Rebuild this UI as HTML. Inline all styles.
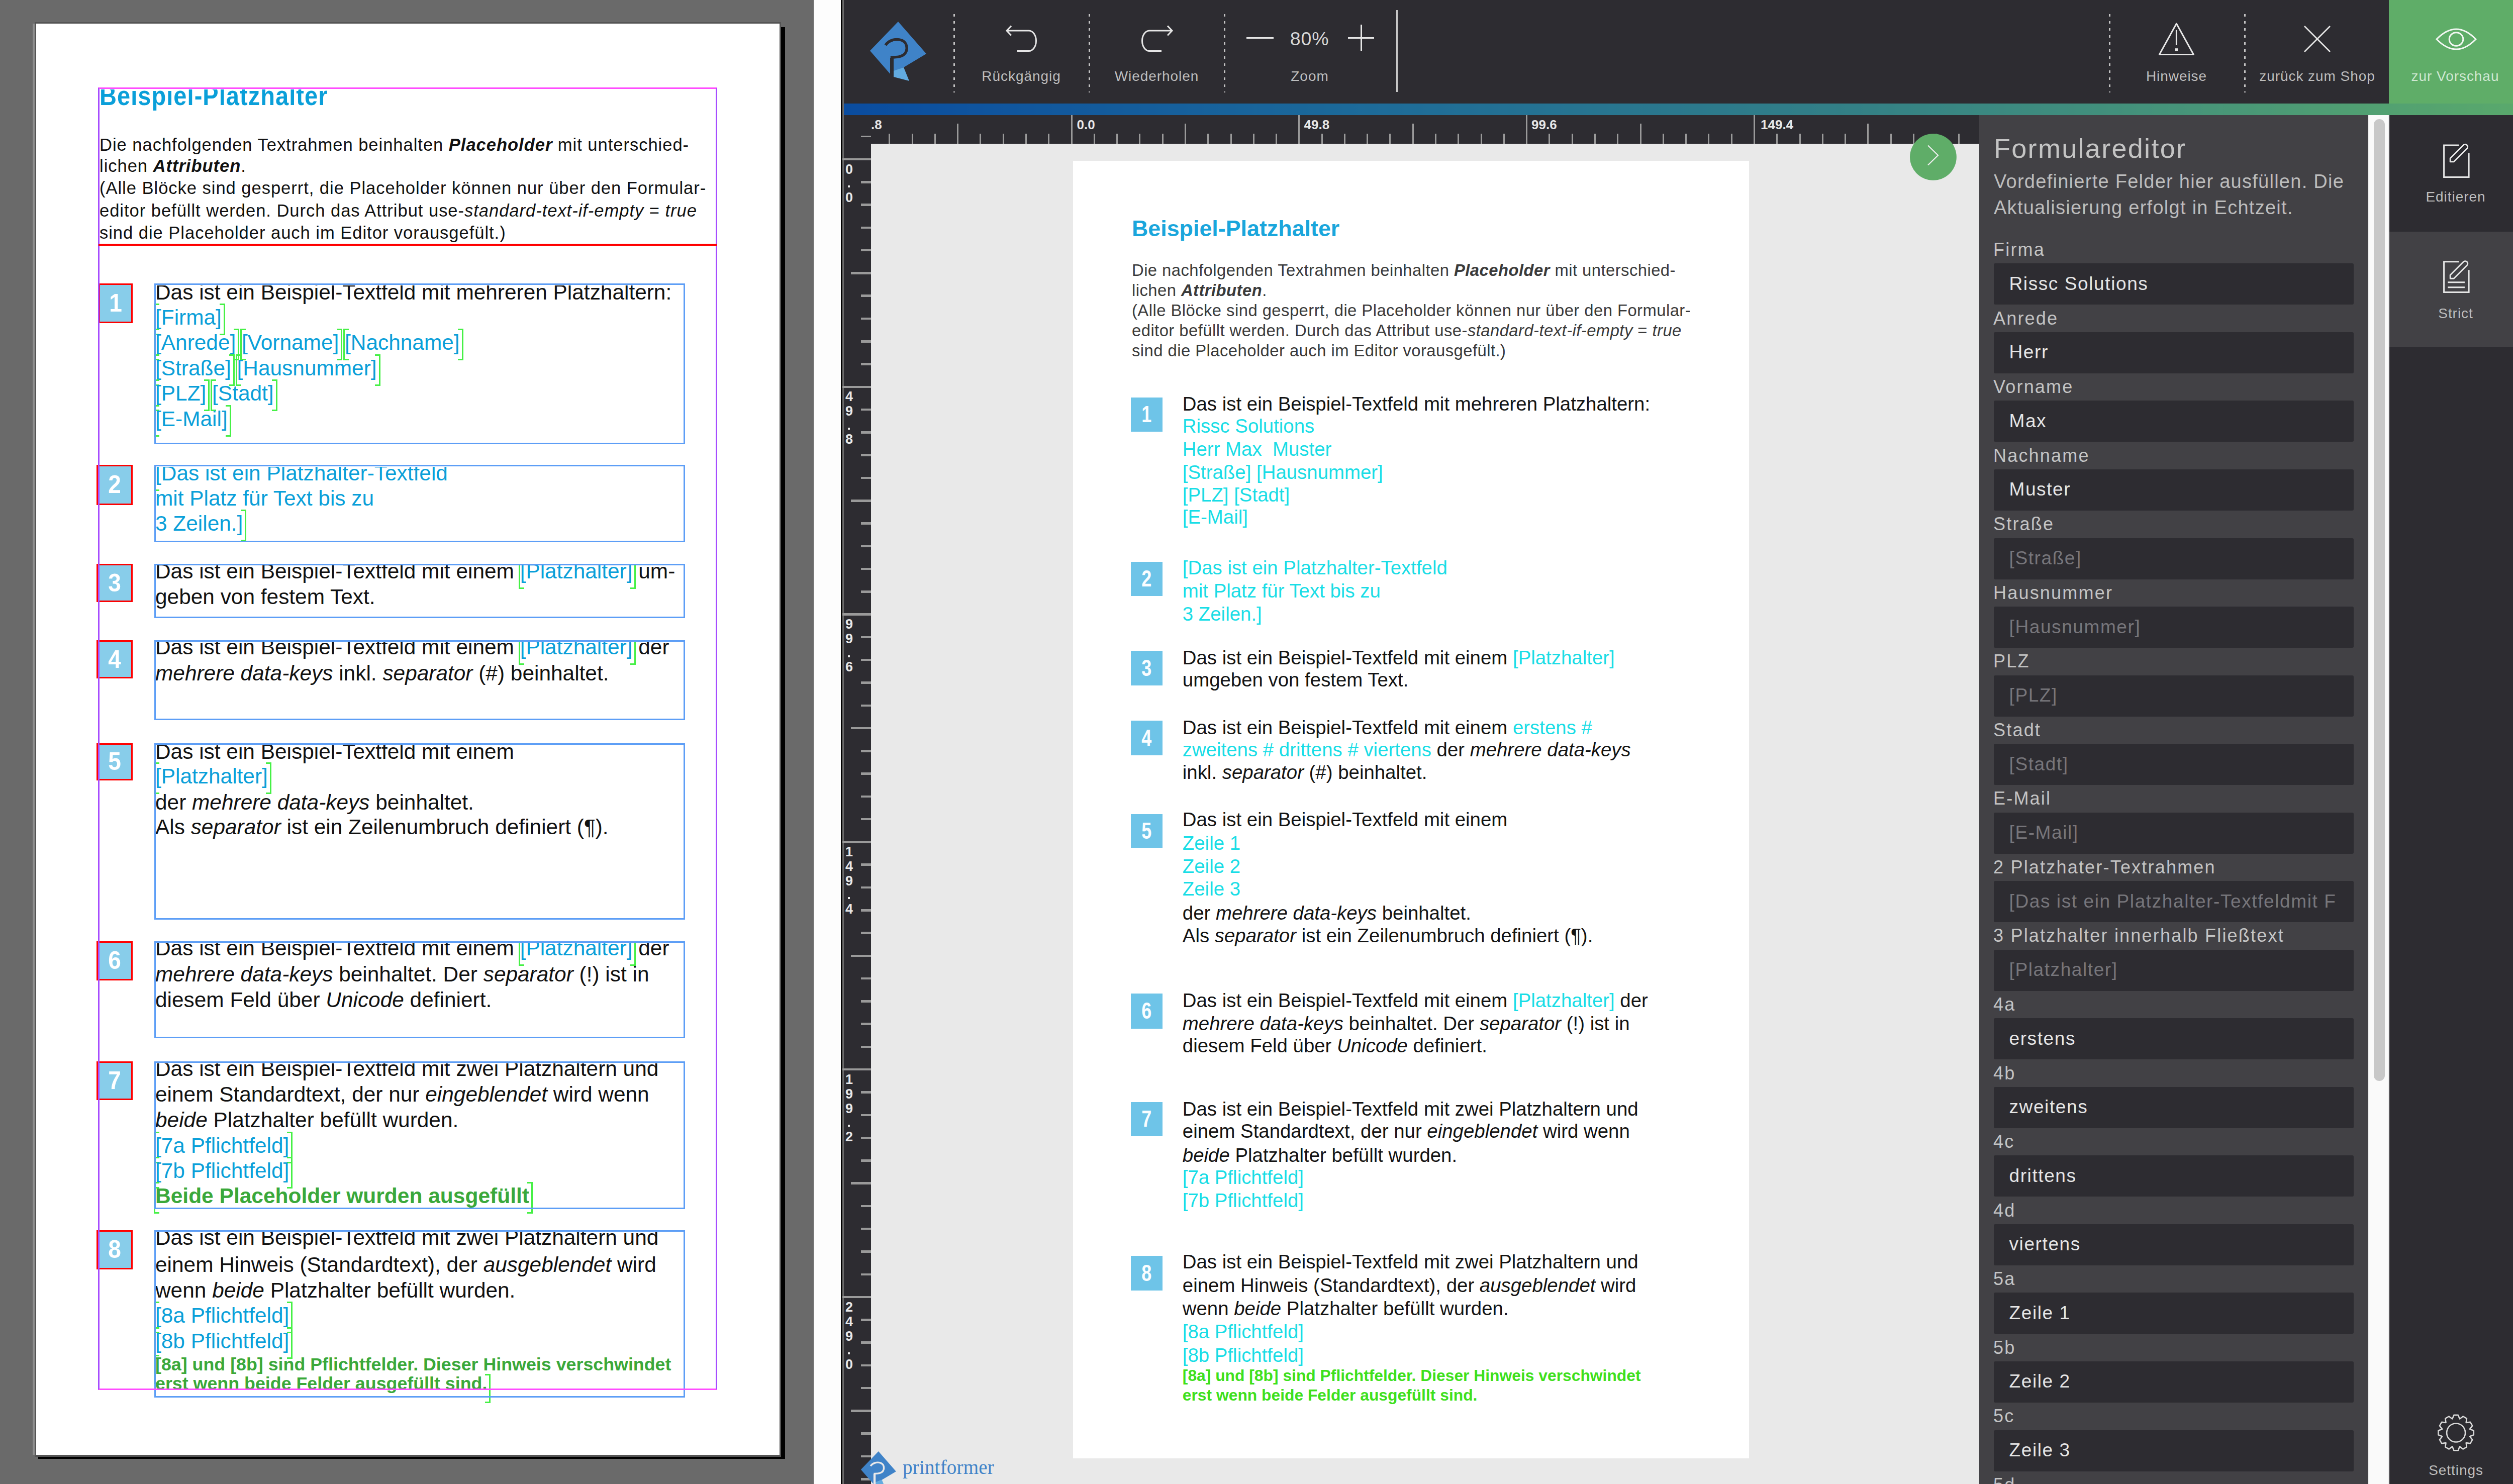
<!DOCTYPE html>
<html><head><meta charset="utf-8">
<style>
*{margin:0;padding:0;box-sizing:border-box}
html,body{width:5020px;height:2953px;overflow:hidden;background:#6a6a6a;font-family:"Liberation Sans",sans-serif}
.a{position:absolute}
.t{position:absolute;white-space:pre}
i{font-style:italic}
b{font-weight:bold}
svg{position:absolute;overflow:visible}
.mo,.mc{display:inline-block;position:relative;width:0;height:0}
.mo::before,.mc::before{content:"";position:absolute;top:-42px;width:8px;height:57px;border:3.5px solid #46f046}
.mo::before{left:-3px;border-right:none}
.mc::before{left:-4px;border-left:none}
.mo.s::before,.mc.s::before{top:-31px;height:52px}
</style></head><body>
<div class="a" style="left:0.0px;top:0.0px;width:1619.0px;height:2953.0px;background:#6a6a6a;"></div>
<div class="a" style="left:65.0px;top:47.0px;width:4.0px;height:2848.0px;background:#8f8f8f;"></div>
<div class="a" style="left:76.0px;top:2899.0px;width:1485.0px;height:3.5px;background:#000;"></div>
<div class="a" style="left:1554.0px;top:54.0px;width:7.5px;height:2848.5px;background:#000;"></div>
<div class="a" style="left:69.0px;top:43.5px;width:1485.0px;height:2855.5px;background:#555;"></div>
<div class="a" style="left:72.0px;top:47.0px;width:1479.0px;height:2848.0px;background:#fff;"></div>
<div class="a" style="left:0;top:177.5px;width:1600px;height:2900px;overflow:hidden"><div class="a" style="left:0;top:-177.5px;width:1600px;height:2953px">
<div class="t" style="left:198.0px;top:165.1px;font-size:47px;line-height:56px;color:#0a9fd9;font-weight:bold;letter-spacing:1.05px;transform:scaleY(1.15);transform-origin:0 44.29px">Beispiel-Platzhalter</div>
</div></div>
<div class="t" style="left:198.0px;top:266.6px;font-size:34.6px;line-height:42px;color:#111;letter-spacing:0.95px">Die nachfolgenden Textrahmen beinhalten <b><i>Placeholder</i></b> mit unterschied-</div>
<div class="t" style="left:198.0px;top:309.0px;font-size:34.6px;line-height:42px;color:#111;letter-spacing:0.95px">lichen <b><i>Attributen</i></b>.</div>
<div class="t" style="left:198.0px;top:353.3px;font-size:34.6px;line-height:42px;color:#111;letter-spacing:0.95px">(Alle Blöcke sind gesperrt, die Placeholder können nur über den Formular-</div>
<div class="t" style="left:198.0px;top:398.2px;font-size:34.6px;line-height:42px;color:#111;letter-spacing:0.95px">editor befüllt werden. Durch das Attribut use-<i>standard-text-if-empty</i> = <i>true</i></div>
<div class="t" style="left:198.0px;top:442.0px;font-size:34.6px;line-height:42px;color:#111;letter-spacing:0.95px">sind die Placeholder auch im Editor vorausgefült.)</div>
<div class="a" style="left:0;top:567.7px;width:1600px;height:2900px;overflow:hidden"><div class="a" style="left:0;top:-567.7px;width:1600px;height:2953px">
<div class="t" style="left:309.0px;top:556.2px;font-size:42.4px;line-height:51px;color:#111;">Das ist ein Beispiel-Textfeld mit mehreren Platzhaltern:</div>
<div class="t" style="left:309.0px;top:606.2px;font-size:42.4px;line-height:51px;color:#111;"><span class="mo"></span><span style="color:#0a9fd9">[Firma]</span><span class="mc"></span></div>
<div class="t" style="left:309.0px;top:656.3px;font-size:42.4px;line-height:51px;color:#111;"><span class="mo"></span><span style="color:#0a9fd9">[Anrede]</span><span class="mc"></span> <span class="mo"></span><span style="color:#0a9fd9">[Vorname]</span><span class="mc"></span> <span class="mo"></span><span style="color:#0a9fd9">[Nachname]</span><span class="mc"></span></div>
<div class="t" style="left:309.0px;top:706.8px;font-size:42.4px;line-height:51px;color:#111;"><span class="mo"></span><span style="color:#0a9fd9">[Straße]</span><span class="mc"></span> <span class="mo"></span><span style="color:#0a9fd9">[Hausnummer]</span><span class="mc"></span></div>
<div class="t" style="left:309.0px;top:757.4px;font-size:42.4px;line-height:51px;color:#111;"><span class="mo"></span><span style="color:#0a9fd9">[PLZ]</span><span class="mc"></span> <span class="mo"></span><span style="color:#0a9fd9">[Stadt]</span><span class="mc"></span></div>
<div class="t" style="left:309.0px;top:807.5px;font-size:42.4px;line-height:51px;color:#111;"><span class="mo"></span><span style="color:#0a9fd9">[E-Mail]</span><span class="mc"></span></div>
</div></div>
<div class="a" style="left:0;top:928.7px;width:1600px;height:2900px;overflow:hidden"><div class="a" style="left:0;top:-928.7px;width:1600px;height:2953px">
<div class="t" style="left:309.0px;top:915.8px;font-size:42.4px;line-height:51px;color:#111;"><span class="mo"></span><span style="color:#0a9fd9">[Das ist ein Platzhalter-Textfeld</span></div>
<div class="t" style="left:309.0px;top:966.4px;font-size:42.4px;line-height:51px;color:#111;"><span style="color:#0a9fd9">mit Platz für Text bis zu</span></div>
<div class="t" style="left:309.0px;top:1016.4px;font-size:42.4px;line-height:51px;color:#111;"><span style="color:#0a9fd9">3 Zeilen.]</span><span class="mc"></span></div>
</div></div>
<div class="a" style="left:0;top:1125.2px;width:1600px;height:2900px;overflow:hidden"><div class="a" style="left:0;top:-1125.2px;width:1600px;height:2953px">
<div class="t" style="left:309.0px;top:1111.4px;font-size:42.4px;line-height:51px;color:#111;">Das ist ein Beispiel-Textfeld mit einem <span class="mo"></span><span style="color:#0a9fd9">[Platzhalter]</span><span class="mc"></span> um-</div>
<div class="t" style="left:309.0px;top:1162.0px;font-size:42.4px;line-height:51px;color:#111;">geben von festem Text.</div>
</div></div>
<div class="a" style="left:0;top:1277.5px;width:1600px;height:2900px;overflow:hidden"><div class="a" style="left:0;top:-1277.5px;width:1600px;height:2953px">
<div class="t" style="left:309.0px;top:1261.8px;font-size:42.4px;line-height:51px;color:#111;">Das ist ein Beispiel-Textfeld mit einem <span class="mo"></span><span style="color:#0a9fd9">[Platzhalter]</span><span class="mc"></span> der</div>
<div class="t" style="left:309.0px;top:1313.7px;font-size:42.4px;line-height:51px;color:#111;"><i>mehrere data-keys</i> inkl. <i>separator</i> (#) beinhaltet.</div>
</div></div>
<div class="a" style="left:0;top:1482.8px;width:1600px;height:2900px;overflow:hidden"><div class="a" style="left:0;top:-1482.8px;width:1600px;height:2953px">
<div class="t" style="left:309.0px;top:1469.8px;font-size:42.4px;line-height:51px;color:#111;">Das ist ein Beispiel-Textfeld mit einem</div>
<div class="t" style="left:309.0px;top:1518.8px;font-size:42.4px;line-height:51px;color:#111;"><span class="mo"></span><span style="color:#0a9fd9">[Platzhalter]</span><span class="mc"></span></div>
<div class="t" style="left:309.0px;top:1570.6px;font-size:42.4px;line-height:51px;color:#111;">der <i>mehrere data-keys</i> beinhaltet.</div>
<div class="t" style="left:309.0px;top:1619.8px;font-size:42.4px;line-height:51px;color:#111;">Als <i>separator</i> ist ein Zeilenumbruch definiert (¶).</div>
</div></div>
<div class="a" style="left:0;top:1876.5px;width:1600px;height:2900px;overflow:hidden"><div class="a" style="left:0;top:-1876.5px;width:1600px;height:2953px">
<div class="t" style="left:309.0px;top:1861.4px;font-size:42.4px;line-height:51px;color:#111;">Das ist ein Beispiel-Textfeld mit einem <span class="mo"></span><span style="color:#0a9fd9">[Platzhalter]</span><span class="mc"></span> der</div>
<div class="t" style="left:309.0px;top:1913.0px;font-size:42.4px;line-height:51px;color:#111;"><i>mehrere data-keys</i> beinhaltet. Der <i>separator</i> (!) ist in</div>
<div class="t" style="left:309.0px;top:1963.6px;font-size:42.4px;line-height:51px;color:#111;">diesem Feld über <i>Unicode</i> definiert.</div>
</div></div>
<div class="a" style="left:0;top:2115.5px;width:1600px;height:2900px;overflow:hidden"><div class="a" style="left:0;top:-2115.5px;width:1600px;height:2953px">
<div class="t" style="left:309.0px;top:2101.3px;font-size:42.4px;line-height:51px;color:#111;">Das ist ein Beispiel-Textfeld mit zwei Platzhaltern und</div>
<div class="t" style="left:309.0px;top:2151.8px;font-size:42.4px;line-height:51px;color:#111;">einem Standardtext, der nur <i>eingeblendet</i> wird wenn</div>
<div class="t" style="left:309.0px;top:2203.0px;font-size:42.4px;line-height:51px;color:#111;"><i>beide</i> Platzhalter befüllt wurden.</div>
<div class="t" style="left:309.0px;top:2253.6px;font-size:42.4px;line-height:51px;color:#111;"><span class="mo"></span><span style="color:#0a9fd9">[7a Pflichtfeld]</span><span class="mc"></span></div>
<div class="t" style="left:309.0px;top:2303.6px;font-size:42.4px;line-height:51px;color:#111;"><span class="mo"></span><span style="color:#0a9fd9">[7b Pflichtfeld]</span><span class="mc"></span></div>
<div class="t" style="left:309.0px;top:2354.2px;font-size:42.5px;line-height:51px;color:#3aa83a;font-weight:bold"><span class="mo"></span>Beide Placeholder wurden ausgefüllt<span class="mc"></span></div>
</div></div>
<div class="a" style="left:0;top:2451.9px;width:1600px;height:2900px;overflow:hidden"><div class="a" style="left:0;top:-2451.9px;width:1600px;height:2953px">
<div class="t" style="left:309.0px;top:2436.6px;font-size:42.4px;line-height:51px;color:#111;">Das ist ein Beispiel-Textfeld mit zwei Platzhaltern und</div>
<div class="t" style="left:309.0px;top:2490.8px;font-size:42.4px;line-height:51px;color:#111;">einem Hinweis (Standardtext), der <i>ausgeblendet</i> wird</div>
<div class="t" style="left:309.0px;top:2542.3px;font-size:42.4px;line-height:51px;color:#111;">wenn <i>beide</i> Platzhalter befüllt wurden.</div>
<div class="t" style="left:309.0px;top:2592.4px;font-size:42.4px;line-height:51px;color:#111;"><span class="mo"></span><span style="color:#0a9fd9">[8a Pflichtfeld]</span><span class="mc"></span></div>
<div class="t" style="left:309.0px;top:2642.8px;font-size:42.4px;line-height:51px;color:#111;"><span class="mo"></span><span style="color:#0a9fd9">[8b Pflichtfeld]</span><span class="mc"></span></div>
<div class="t" style="left:309.0px;top:2694.1px;font-size:35.8px;line-height:43px;color:#3aa83a;font-weight:bold"><span class="mo s"></span>[8a] und [8b] sind Pflichtfelder. Dieser Hinweis verschwindet</div>
<div class="t" style="left:309.0px;top:2732.1px;font-size:35.8px;line-height:43px;color:#3aa83a;font-weight:bold">erst wenn beide Felder ausgefüllt sind.<span class="mc s"></span></div>
</div></div>
<div class="a" style="left:307px;top:564.2px;width:1056px;height:319.8px;border:3.5px solid #5d9ef6"></div>
<div class="a" style="left:196px;top:564.2px;width:68px;height:78.8px;background:#88cdea;border:3.5px solid #ff0000"></div>
<div class="t" style="left:199.5px;top:564.2px;width:61px;height:78.8px;line-height:78.8px;text-align:center;font-size:46px;font-weight:bold;color:#fff;transform:scaleY(1.09)">1</div>
<div class="a" style="left:307px;top:925.2px;width:1056px;height:153.8px;border:3.5px solid #5d9ef6"></div>
<div class="a" style="left:192px;top:925.2px;width:72px;height:79.4px;background:#88cdea;border:3.5px solid #ff0000"></div>
<div class="t" style="left:195.5px;top:925.2px;width:65px;height:79.4px;line-height:79.4px;text-align:center;font-size:46px;font-weight:bold;color:#fff;transform:scaleY(1.09)">2</div>
<div class="a" style="left:307px;top:1121.7px;width:1056px;height:108.8px;border:3.5px solid #5d9ef6"></div>
<div class="a" style="left:192px;top:1121.7px;width:72px;height:76.3px;background:#88cdea;border:3.5px solid #ff0000"></div>
<div class="t" style="left:195.5px;top:1121.7px;width:65px;height:76.3px;line-height:76.3px;text-align:center;font-size:46px;font-weight:bold;color:#fff;transform:scaleY(1.09)">3</div>
<div class="a" style="left:307px;top:1274.0px;width:1056px;height:158.8px;border:3.5px solid #5d9ef6"></div>
<div class="a" style="left:192px;top:1274.0px;width:72px;height:76.3px;background:#88cdea;border:3.5px solid #ff0000"></div>
<div class="t" style="left:195.5px;top:1274.0px;width:65px;height:76.3px;line-height:76.3px;text-align:center;font-size:46px;font-weight:bold;color:#fff;transform:scaleY(1.09)">4</div>
<div class="a" style="left:307px;top:1479.3px;width:1056px;height:350.7px;border:3.5px solid #5d9ef6"></div>
<div class="a" style="left:192px;top:1479.3px;width:72px;height:73.7px;background:#88cdea;border:3.5px solid #ff0000"></div>
<div class="t" style="left:195.5px;top:1479.3px;width:65px;height:73.7px;line-height:73.7px;text-align:center;font-size:46px;font-weight:bold;color:#fff;transform:scaleY(1.09)">5</div>
<div class="a" style="left:307px;top:1873.0px;width:1056px;height:192.7px;border:3.5px solid #5d9ef6"></div>
<div class="a" style="left:192px;top:1873.0px;width:72px;height:77.6px;background:#88cdea;border:3.5px solid #ff0000"></div>
<div class="t" style="left:195.5px;top:1873.0px;width:65px;height:77.6px;line-height:77.6px;text-align:center;font-size:46px;font-weight:bold;color:#fff;transform:scaleY(1.09)">6</div>
<div class="a" style="left:307px;top:2112.0px;width:1056px;height:293.7px;border:3.5px solid #5d9ef6"></div>
<div class="a" style="left:192px;top:2112.0px;width:72px;height:77.0px;background:#88cdea;border:3.5px solid #ff0000"></div>
<div class="t" style="left:195.5px;top:2112.0px;width:65px;height:77.0px;line-height:77.0px;text-align:center;font-size:46px;font-weight:bold;color:#fff;transform:scaleY(1.09)">7</div>
<div class="a" style="left:307px;top:2448.4px;width:1056px;height:332.8px;border:3.5px solid #5d9ef6"></div>
<div class="a" style="left:192px;top:2448.4px;width:72px;height:77.4px;background:#88cdea;border:3.5px solid #ff0000"></div>
<div class="t" style="left:195.5px;top:2448.4px;width:65px;height:77.4px;line-height:77.4px;text-align:center;font-size:46px;font-weight:bold;color:#fff;transform:scaleY(1.09)">8</div>
<div class="a" style="left:195px;top:174px;width:1232px;height:2592px;border:3.5px solid #a64cff;border-top-color:#ff4cff;border-bottom-color:#ff4cff"></div>
<div class="a" style="left:196.0px;top:485.0px;width:1230.0px;height:3.5px;background:#ff0000;"></div>
<div class="a" style="left:1619.0px;top:0.0px;width:54.0px;height:2953.0px;background:#fdfdfd;"></div>
<div class="a" style="left:1673.0px;top:0.0px;width:3.0px;height:2953.0px;background:#000;"></div>
<div class="a" style="left:1676.0px;top:0.0px;width:3.0px;height:2953.0px;background:#6b6b6b;"></div>
<div class="a" style="left:1679.0px;top:0.0px;width:3341.0px;height:2953.0px;background:#2d2c31;"></div>
<div class="a" style="left:4753.0px;top:0.0px;width:267.0px;height:207.0px;background:#5fad68;"></div>
<div class="a" style="left:1679.0px;top:206.0px;width:3341.0px;height:23.0px;background:linear-gradient(90deg,#0a4c9f 0%,#1c6a9a 30%,#338086 60%,#5aa96c 100%);"></div>
<svg style="left:1720px;top:35px" width="130.0" height="135.0" viewBox="0 0 130 135"><path d="M67,8 L123,72 L78,99 L58,107 L58,80 L51,80 L51,112 L11,66 Z" fill="#3f83c8"/><path d="M58,106 L78,99 L89,126 L58,118 Z" fill="#62abe0"/><path d="M42,55 C48,45 62,41 74,45 C88,51 88,72 72,77 C66,79 60,79 54.5,79 L54.5,112" fill="none" stroke="#2d2c31" stroke-width="5.5"/></svg>
<div class="a" style="left:1897.1px;top:28px;width:3px;height:156px;background:repeating-linear-gradient(180deg,#c4c4c4 0 5.5px,transparent 5.5px 14px)"></div>
<div class="a" style="left:2166.1px;top:28px;width:3px;height:156px;background:repeating-linear-gradient(180deg,#c4c4c4 0 5.5px,transparent 5.5px 14px)"></div>
<div class="a" style="left:2435.2px;top:28px;width:3px;height:156px;background:repeating-linear-gradient(180deg,#c4c4c4 0 5.5px,transparent 5.5px 14px)"></div>
<div class="a" style="left:4195.5px;top:28px;width:3px;height:156px;background:repeating-linear-gradient(180deg,#c4c4c4 0 5.5px,transparent 5.5px 14px)"></div>
<div class="a" style="left:4464.5px;top:28px;width:3px;height:156px;background:repeating-linear-gradient(180deg,#c4c4c4 0 5.5px,transparent 5.5px 14px)"></div>
<div class="a" style="left:2778.0px;top:20.0px;width:3.0px;height:163.0px;background:#c8c8c8;"></div>
<svg style="left:0;top:0" width="1" height="1"><path d="M2003,61 H2047 A14.5,20.3 0 0 1 2047,101.6 H2024 M2012,51.5 L2003,61 L2012,70.5" fill="none" stroke="#e6e6e6" stroke-width="3"/></svg>
<svg style="left:0;top:0" width="1" height="1"><path d="M2332,61 H2287 A14.5,20.3 0 0 0 2287,101.6 H2311 M2323,51.5 L2332,61 L2323,70.5" fill="none" stroke="#e6e6e6" stroke-width="3"/></svg>
<div class="a" style="left:2479.5px;top:73.5px;width:54.5px;height:3.0px;background:#e6e6e6;"></div>
<div class="a" style="left:2682.0px;top:73.5px;width:52.0px;height:3.0px;background:#e6e6e6;"></div>
<div class="a" style="left:2706.5px;top:49.0px;width:3.0px;height:52.0px;background:#e6e6e6;"></div>
<div class="t" style="left:1605.7px;width:2000px;text-align:center;top:55.0px;font-size:37.5px;line-height:45px;color:#d6d6d6;letter-spacing:1px">80%</div>
<div class="t" style="left:1032.0px;width:2000px;text-align:center;top:135.3px;font-size:28px;line-height:34px;color:#bdbdbd;letter-spacing:0.95px">Rückgängig</div>
<div class="t" style="left:1301.5px;width:2000px;text-align:center;top:135.3px;font-size:28px;line-height:34px;color:#bdbdbd;letter-spacing:0.95px">Wiederholen</div>
<div class="t" style="left:1606.0px;width:2000px;text-align:center;top:135.3px;font-size:28px;line-height:34px;color:#bdbdbd;letter-spacing:0.95px">Zoom</div>
<div class="t" style="left:3330.5px;width:2000px;text-align:center;top:134.6px;font-size:28px;line-height:34px;color:#bdbdbd;letter-spacing:0.95px">Hinweise</div>
<div class="t" style="left:3610.5px;width:2000px;text-align:center;top:134.6px;font-size:28px;line-height:34px;color:#bdbdbd;letter-spacing:0.95px">zurück zum Shop</div>
<div class="t" style="left:3885.0px;width:2000px;text-align:center;top:134.6px;font-size:28px;line-height:34px;color:#cfe8d2;letter-spacing:0.95px">zur Vorschau</div>
<svg style="left:0;top:0" width="1" height="1"><path d="M4330.4,47 L4364.4,108.5 L4296.4,108.5 Z" fill="none" stroke="#e6e6e6" stroke-width="3" stroke-linejoin="round"/><path d="M4330.4,59.8 V90" stroke="#e6e6e6" stroke-width="3"/><rect x="4327.8" y="96.2" width="5.2" height="5.2" fill="#e6e6e6"/></svg>
<svg style="left:0;top:0" width="1" height="1"><path d="M4585,52 L4636,103 M4636,52 L4585,103" stroke="#e6e6e6" stroke-width="2.8"/></svg>
<svg style="left:0;top:0" width="1" height="1"><path d="M4848,78 Q4887,38 4926,78 Q4887,118 4848,78 Z" fill="none" stroke="#f2f7f2" stroke-width="3"/><ellipse cx="4887" cy="78" rx="13.8" ry="13.3" fill="none" stroke="#f2f7f2" stroke-width="3"/></svg>
<div class="a" style="left:1768.3px;top:266.0px;width:3.0px;height:20.0px;background:#9a9a9a;"></div>
<div class="a" style="left:1813.5px;top:266.0px;width:3.0px;height:20.0px;background:#9a9a9a;"></div>
<div class="a" style="left:1858.8px;top:266.0px;width:3.0px;height:20.0px;background:#9a9a9a;"></div>
<div class="a" style="left:1904.1px;top:246.0px;width:3.0px;height:40.0px;background:#9a9a9a;"></div>
<div class="a" style="left:1949.4px;top:266.0px;width:3.0px;height:20.0px;background:#9a9a9a;"></div>
<div class="a" style="left:1994.7px;top:266.0px;width:3.0px;height:20.0px;background:#9a9a9a;"></div>
<div class="a" style="left:2039.9px;top:266.0px;width:3.0px;height:20.0px;background:#9a9a9a;"></div>
<div class="a" style="left:2085.2px;top:266.0px;width:3.0px;height:20.0px;background:#9a9a9a;"></div>
<div class="a" style="left:2130.5px;top:229.0px;width:3.0px;height:57.0px;background:#9a9a9a;"></div>
<div class="a" style="left:2175.8px;top:266.0px;width:3.0px;height:20.0px;background:#9a9a9a;"></div>
<div class="a" style="left:2221.1px;top:266.0px;width:3.0px;height:20.0px;background:#9a9a9a;"></div>
<div class="a" style="left:2266.3px;top:266.0px;width:3.0px;height:20.0px;background:#9a9a9a;"></div>
<div class="a" style="left:2311.6px;top:266.0px;width:3.0px;height:20.0px;background:#9a9a9a;"></div>
<div class="a" style="left:2356.9px;top:246.0px;width:3.0px;height:40.0px;background:#9a9a9a;"></div>
<div class="a" style="left:2402.2px;top:266.0px;width:3.0px;height:20.0px;background:#9a9a9a;"></div>
<div class="a" style="left:2447.5px;top:266.0px;width:3.0px;height:20.0px;background:#9a9a9a;"></div>
<div class="a" style="left:2492.7px;top:266.0px;width:3.0px;height:20.0px;background:#9a9a9a;"></div>
<div class="a" style="left:2538.0px;top:266.0px;width:3.0px;height:20.0px;background:#9a9a9a;"></div>
<div class="a" style="left:2583.3px;top:229.0px;width:3.0px;height:57.0px;background:#9a9a9a;"></div>
<div class="a" style="left:2628.6px;top:266.0px;width:3.0px;height:20.0px;background:#9a9a9a;"></div>
<div class="a" style="left:2673.9px;top:266.0px;width:3.0px;height:20.0px;background:#9a9a9a;"></div>
<div class="a" style="left:2719.1px;top:266.0px;width:3.0px;height:20.0px;background:#9a9a9a;"></div>
<div class="a" style="left:2764.4px;top:266.0px;width:3.0px;height:20.0px;background:#9a9a9a;"></div>
<div class="a" style="left:2809.7px;top:246.0px;width:3.0px;height:40.0px;background:#9a9a9a;"></div>
<div class="a" style="left:2855.0px;top:266.0px;width:3.0px;height:20.0px;background:#9a9a9a;"></div>
<div class="a" style="left:2900.3px;top:266.0px;width:3.0px;height:20.0px;background:#9a9a9a;"></div>
<div class="a" style="left:2945.5px;top:266.0px;width:3.0px;height:20.0px;background:#9a9a9a;"></div>
<div class="a" style="left:2990.8px;top:266.0px;width:3.0px;height:20.0px;background:#9a9a9a;"></div>
<div class="a" style="left:3036.1px;top:229.0px;width:3.0px;height:57.0px;background:#9a9a9a;"></div>
<div class="a" style="left:3081.4px;top:266.0px;width:3.0px;height:20.0px;background:#9a9a9a;"></div>
<div class="a" style="left:3126.7px;top:266.0px;width:3.0px;height:20.0px;background:#9a9a9a;"></div>
<div class="a" style="left:3171.9px;top:266.0px;width:3.0px;height:20.0px;background:#9a9a9a;"></div>
<div class="a" style="left:3217.2px;top:266.0px;width:3.0px;height:20.0px;background:#9a9a9a;"></div>
<div class="a" style="left:3262.5px;top:246.0px;width:3.0px;height:40.0px;background:#9a9a9a;"></div>
<div class="a" style="left:3307.8px;top:266.0px;width:3.0px;height:20.0px;background:#9a9a9a;"></div>
<div class="a" style="left:3353.1px;top:266.0px;width:3.0px;height:20.0px;background:#9a9a9a;"></div>
<div class="a" style="left:3398.3px;top:266.0px;width:3.0px;height:20.0px;background:#9a9a9a;"></div>
<div class="a" style="left:3443.6px;top:266.0px;width:3.0px;height:20.0px;background:#9a9a9a;"></div>
<div class="a" style="left:3488.9px;top:229.0px;width:3.0px;height:57.0px;background:#9a9a9a;"></div>
<div class="a" style="left:3534.2px;top:266.0px;width:3.0px;height:20.0px;background:#9a9a9a;"></div>
<div class="a" style="left:3579.5px;top:266.0px;width:3.0px;height:20.0px;background:#9a9a9a;"></div>
<div class="a" style="left:3624.7px;top:266.0px;width:3.0px;height:20.0px;background:#9a9a9a;"></div>
<div class="a" style="left:3670.0px;top:266.0px;width:3.0px;height:20.0px;background:#9a9a9a;"></div>
<div class="a" style="left:3715.3px;top:246.0px;width:3.0px;height:40.0px;background:#9a9a9a;"></div>
<div class="a" style="left:3760.6px;top:266.0px;width:3.0px;height:20.0px;background:#9a9a9a;"></div>
<div class="a" style="left:3805.9px;top:266.0px;width:3.0px;height:20.0px;background:#9a9a9a;"></div>
<div class="a" style="left:3851.1px;top:266.0px;width:3.0px;height:20.0px;background:#9a9a9a;"></div>
<div class="a" style="left:3896.4px;top:266.0px;width:3.0px;height:20.0px;background:#9a9a9a;"></div>
<div class="t" style="left:1733.0px;top:232.5px;font-size:26px;line-height:31px;color:#e8e8e8;font-weight:bold">.8</div>
<div class="t" style="left:2142.6px;top:232.5px;font-size:26px;line-height:31px;color:#e8e8e8;font-weight:bold">0.0</div>
<div class="t" style="left:2594.6px;top:232.5px;font-size:26px;line-height:31px;color:#e8e8e8;font-weight:bold">49.8</div>
<div class="t" style="left:3047.0px;top:232.5px;font-size:26px;line-height:31px;color:#e8e8e8;font-weight:bold">99.6</div>
<div class="t" style="left:3503.0px;top:232.5px;font-size:26px;line-height:31px;color:#e8e8e8;font-weight:bold">149.4</div>
<div class="a" style="left:1713.0px;top:270.0px;width:20.0px;height:3.0px;background:#9a9a9a;"></div>
<div class="a" style="left:1676.0px;top:314.8px;width:57.0px;height:4.5px;background:#9a9a9a;"></div>
<div class="a" style="left:1713.0px;top:360.0px;width:20.0px;height:4.5px;background:#9a9a9a;"></div>
<div class="a" style="left:1713.0px;top:405.3px;width:20.0px;height:4.5px;background:#9a9a9a;"></div>
<div class="a" style="left:1713.0px;top:450.6px;width:20.0px;height:4.5px;background:#9a9a9a;"></div>
<div class="a" style="left:1713.0px;top:495.9px;width:20.0px;height:4.5px;background:#9a9a9a;"></div>
<div class="a" style="left:1693.0px;top:541.1px;width:40.0px;height:4.5px;background:#9a9a9a;"></div>
<div class="a" style="left:1713.0px;top:586.4px;width:20.0px;height:4.5px;background:#9a9a9a;"></div>
<div class="a" style="left:1713.0px;top:631.7px;width:20.0px;height:4.5px;background:#9a9a9a;"></div>
<div class="a" style="left:1713.0px;top:677.0px;width:20.0px;height:4.5px;background:#9a9a9a;"></div>
<div class="a" style="left:1713.0px;top:722.3px;width:20.0px;height:4.5px;background:#9a9a9a;"></div>
<div class="a" style="left:1676.0px;top:767.5px;width:57.0px;height:4.5px;background:#9a9a9a;"></div>
<div class="a" style="left:1713.0px;top:812.8px;width:20.0px;height:4.5px;background:#9a9a9a;"></div>
<div class="a" style="left:1713.0px;top:858.1px;width:20.0px;height:4.5px;background:#9a9a9a;"></div>
<div class="a" style="left:1713.0px;top:903.4px;width:20.0px;height:4.5px;background:#9a9a9a;"></div>
<div class="a" style="left:1713.0px;top:948.7px;width:20.0px;height:4.5px;background:#9a9a9a;"></div>
<div class="a" style="left:1693.0px;top:994.0px;width:40.0px;height:4.5px;background:#9a9a9a;"></div>
<div class="a" style="left:1713.0px;top:1039.2px;width:20.0px;height:4.5px;background:#9a9a9a;"></div>
<div class="a" style="left:1713.0px;top:1084.5px;width:20.0px;height:4.5px;background:#9a9a9a;"></div>
<div class="a" style="left:1713.0px;top:1129.8px;width:20.0px;height:4.5px;background:#9a9a9a;"></div>
<div class="a" style="left:1713.0px;top:1175.1px;width:20.0px;height:4.5px;background:#9a9a9a;"></div>
<div class="a" style="left:1676.0px;top:1220.3px;width:57.0px;height:4.5px;background:#9a9a9a;"></div>
<div class="a" style="left:1713.0px;top:1265.6px;width:20.0px;height:4.5px;background:#9a9a9a;"></div>
<div class="a" style="left:1713.0px;top:1310.9px;width:20.0px;height:4.5px;background:#9a9a9a;"></div>
<div class="a" style="left:1713.0px;top:1356.2px;width:20.0px;height:4.5px;background:#9a9a9a;"></div>
<div class="a" style="left:1713.0px;top:1401.5px;width:20.0px;height:4.5px;background:#9a9a9a;"></div>
<div class="a" style="left:1693.0px;top:1446.8px;width:40.0px;height:4.5px;background:#9a9a9a;"></div>
<div class="a" style="left:1713.0px;top:1492.0px;width:20.0px;height:4.5px;background:#9a9a9a;"></div>
<div class="a" style="left:1713.0px;top:1537.3px;width:20.0px;height:4.5px;background:#9a9a9a;"></div>
<div class="a" style="left:1713.0px;top:1582.6px;width:20.0px;height:4.5px;background:#9a9a9a;"></div>
<div class="a" style="left:1713.0px;top:1627.9px;width:20.0px;height:4.5px;background:#9a9a9a;"></div>
<div class="a" style="left:1676.0px;top:1673.2px;width:57.0px;height:4.5px;background:#9a9a9a;"></div>
<div class="a" style="left:1713.0px;top:1718.4px;width:20.0px;height:4.5px;background:#9a9a9a;"></div>
<div class="a" style="left:1713.0px;top:1763.7px;width:20.0px;height:4.5px;background:#9a9a9a;"></div>
<div class="a" style="left:1713.0px;top:1809.0px;width:20.0px;height:4.5px;background:#9a9a9a;"></div>
<div class="a" style="left:1713.0px;top:1854.3px;width:20.0px;height:4.5px;background:#9a9a9a;"></div>
<div class="a" style="left:1693.0px;top:1899.5px;width:40.0px;height:4.5px;background:#9a9a9a;"></div>
<div class="a" style="left:1713.0px;top:1944.8px;width:20.0px;height:4.5px;background:#9a9a9a;"></div>
<div class="a" style="left:1713.0px;top:1990.1px;width:20.0px;height:4.5px;background:#9a9a9a;"></div>
<div class="a" style="left:1713.0px;top:2035.4px;width:20.0px;height:4.5px;background:#9a9a9a;"></div>
<div class="a" style="left:1713.0px;top:2080.7px;width:20.0px;height:4.5px;background:#9a9a9a;"></div>
<div class="a" style="left:1676.0px;top:2125.9px;width:57.0px;height:4.5px;background:#9a9a9a;"></div>
<div class="a" style="left:1713.0px;top:2171.2px;width:20.0px;height:4.5px;background:#9a9a9a;"></div>
<div class="a" style="left:1713.0px;top:2216.5px;width:20.0px;height:4.5px;background:#9a9a9a;"></div>
<div class="a" style="left:1713.0px;top:2261.8px;width:20.0px;height:4.5px;background:#9a9a9a;"></div>
<div class="a" style="left:1713.0px;top:2307.1px;width:20.0px;height:4.5px;background:#9a9a9a;"></div>
<div class="a" style="left:1693.0px;top:2352.4px;width:40.0px;height:4.5px;background:#9a9a9a;"></div>
<div class="a" style="left:1713.0px;top:2397.6px;width:20.0px;height:4.5px;background:#9a9a9a;"></div>
<div class="a" style="left:1713.0px;top:2442.9px;width:20.0px;height:4.5px;background:#9a9a9a;"></div>
<div class="a" style="left:1713.0px;top:2488.2px;width:20.0px;height:4.5px;background:#9a9a9a;"></div>
<div class="a" style="left:1713.0px;top:2533.5px;width:20.0px;height:4.5px;background:#9a9a9a;"></div>
<div class="a" style="left:1676.0px;top:2578.8px;width:57.0px;height:4.5px;background:#9a9a9a;"></div>
<div class="a" style="left:1713.0px;top:2624.0px;width:20.0px;height:4.5px;background:#9a9a9a;"></div>
<div class="a" style="left:1713.0px;top:2669.3px;width:20.0px;height:4.5px;background:#9a9a9a;"></div>
<div class="a" style="left:1713.0px;top:2714.6px;width:20.0px;height:4.5px;background:#9a9a9a;"></div>
<div class="a" style="left:1713.0px;top:2759.9px;width:20.0px;height:4.5px;background:#9a9a9a;"></div>
<div class="a" style="left:1693.0px;top:2805.2px;width:40.0px;height:4.5px;background:#9a9a9a;"></div>
<div class="a" style="left:1713.0px;top:2850.4px;width:20.0px;height:4.5px;background:#9a9a9a;"></div>
<div class="a" style="left:1713.0px;top:2895.7px;width:20.0px;height:4.5px;background:#9a9a9a;"></div>
<div class="a" style="left:1713.0px;top:2941.0px;width:20.0px;height:4.5px;background:#9a9a9a;"></div>
<div class="t" style="left:1682.0px;top:320.6px;font-size:27px;line-height:32px;color:#e8e8e8;font-weight:bold">0</div>
<div class="a" style="left:1687.0px;top:369.0px;width:4.0px;height:4.0px;background:#e8e8e8;"></div>
<div class="t" style="left:1682.0px;top:376.6px;font-size:27px;line-height:32px;color:#e8e8e8;font-weight:bold">0</div>
<div class="t" style="left:1682.0px;top:773.4px;font-size:27px;line-height:32px;color:#e8e8e8;font-weight:bold">4</div>
<div class="t" style="left:1682.0px;top:802.4px;font-size:27px;line-height:32px;color:#e8e8e8;font-weight:bold">9</div>
<div class="a" style="left:1687.0px;top:850.8px;width:4.0px;height:4.0px;background:#e8e8e8;"></div>
<div class="t" style="left:1682.0px;top:858.4px;font-size:27px;line-height:32px;color:#e8e8e8;font-weight:bold">8</div>
<div class="t" style="left:1682.0px;top:1226.2px;font-size:27px;line-height:32px;color:#e8e8e8;font-weight:bold">9</div>
<div class="t" style="left:1682.0px;top:1255.2px;font-size:27px;line-height:32px;color:#e8e8e8;font-weight:bold">9</div>
<div class="a" style="left:1687.0px;top:1303.6px;width:4.0px;height:4.0px;background:#e8e8e8;"></div>
<div class="t" style="left:1682.0px;top:1311.2px;font-size:27px;line-height:32px;color:#e8e8e8;font-weight:bold">6</div>
<div class="t" style="left:1682.0px;top:1679.0px;font-size:27px;line-height:32px;color:#e8e8e8;font-weight:bold">1</div>
<div class="t" style="left:1682.0px;top:1708.0px;font-size:27px;line-height:32px;color:#e8e8e8;font-weight:bold">4</div>
<div class="t" style="left:1682.0px;top:1737.0px;font-size:27px;line-height:32px;color:#e8e8e8;font-weight:bold">9</div>
<div class="a" style="left:1687.0px;top:1785.4px;width:4.0px;height:4.0px;background:#e8e8e8;"></div>
<div class="t" style="left:1682.0px;top:1793.0px;font-size:27px;line-height:32px;color:#e8e8e8;font-weight:bold">4</div>
<div class="t" style="left:1682.0px;top:2131.8px;font-size:27px;line-height:32px;color:#e8e8e8;font-weight:bold">1</div>
<div class="t" style="left:1682.0px;top:2160.8px;font-size:27px;line-height:32px;color:#e8e8e8;font-weight:bold">9</div>
<div class="t" style="left:1682.0px;top:2189.8px;font-size:27px;line-height:32px;color:#e8e8e8;font-weight:bold">9</div>
<div class="a" style="left:1687.0px;top:2238.2px;width:4.0px;height:4.0px;background:#e8e8e8;"></div>
<div class="t" style="left:1682.0px;top:2245.8px;font-size:27px;line-height:32px;color:#e8e8e8;font-weight:bold">2</div>
<div class="t" style="left:1682.0px;top:2584.6px;font-size:27px;line-height:32px;color:#e8e8e8;font-weight:bold">2</div>
<div class="t" style="left:1682.0px;top:2613.6px;font-size:27px;line-height:32px;color:#e8e8e8;font-weight:bold">4</div>
<div class="t" style="left:1682.0px;top:2642.6px;font-size:27px;line-height:32px;color:#e8e8e8;font-weight:bold">9</div>
<div class="a" style="left:1687.0px;top:2691.0px;width:4.0px;height:4.0px;background:#e8e8e8;"></div>
<div class="t" style="left:1682.0px;top:2698.6px;font-size:27px;line-height:32px;color:#e8e8e8;font-weight:bold">0</div>
<div class="a" style="left:1733.0px;top:286.0px;width:2205.0px;height:2667.0px;background:#e9e9e9;"></div>
<div class="a" style="left:2135.0px;top:320.0px;width:1345.0px;height:2582.0px;background:#fff;"></div>
<svg style="left:0;top:0" width="1" height="1"><circle cx="3846.4" cy="312.4" r="46.4" fill="#5fad68"/><path d="M3836,289.5 L3856,309 L3836,328.5" fill="none" stroke="#f0f0f0" stroke-width="2.2"/></svg>
<svg style="left:1706px;top:2883px" width="81.2" height="84.4" viewBox="0 0 130 135"><path d="M67,8 L123,72 L78,99 L58,107 L58,80 L51,80 L51,112 L11,66 Z" fill="#3f83c8"/><path d="M58,106 L78,99 L89,126 L58,118 Z" fill="#62abe0"/><path d="M42,55 C48,45 62,41 74,45 C88,51 88,72 72,77 C66,79 60,79 54.5,79 L54.5,112" fill="none" stroke="#e9e9e9" stroke-width="5.5"/></svg>
<div class="t" style="left:1796.0px;top:2896.0px;font-size:39px;line-height:47px;color:#3f83c8;font-family:'Liberation Serif',serif;letter-spacing:0.2px">printformer</div>
<div class="t" style="left:2252.0px;top:426.8px;font-size:44.8px;line-height:54px;color:#1aa6dc;font-weight:bold">Beispiel-Platzhalter</div>
<div class="t" style="left:2252.0px;top:517.8px;font-size:32.8px;line-height:39px;color:#3a3a3a;letter-spacing:0.45px">Die nachfolgenden Textrahmen beinhalten <b><i>Placeholder</i></b> mit unterschied-</div>
<div class="t" style="left:2252.0px;top:558.4px;font-size:32.8px;line-height:39px;color:#3a3a3a;letter-spacing:0.45px">lichen <b><i>Attributen</i></b>.</div>
<div class="t" style="left:2252.0px;top:598.1px;font-size:32.8px;line-height:39px;color:#3a3a3a;letter-spacing:0.45px">(Alle Blöcke sind gesperrt, die Placeholder können nur über den Formular-</div>
<div class="t" style="left:2252.0px;top:637.8px;font-size:32.8px;line-height:39px;color:#3a3a3a;letter-spacing:0.45px">editor befüllt werden. Durch das Attribut use-<i>standard-text-if-empty</i> = <i>true</i></div>
<div class="t" style="left:2252.0px;top:677.5px;font-size:32.8px;line-height:39px;color:#3a3a3a;letter-spacing:0.45px">sind die Placeholder auch im Editor vorausgefült.)</div>
<div class="a" style="left:2249.6px;top:790.8px;width:63.4px;height:68.4px;background:#6ec4e8;"></div>
<div class="t" style="left:2249.6px;top:790.8px;width:63.4px;height:68.4px;line-height:68.4px;text-align:center;font-size:36px;font-weight:bold;color:#fafdff;transform:scaleY(1.26)">1</div>
<div class="t" style="left:2352.8px;top:780.7px;font-size:38.4px;line-height:46px;color:#141414;">Das ist ein Beispiel-Textfeld mit mehreren Platzhaltern:</div>
<div class="t" style="left:2352.8px;top:825.4px;font-size:38.4px;line-height:46px;color:#141414;"><span style="color:#19dde6">Rissc Solutions</span></div>
<div class="t" style="left:2352.8px;top:871.0px;font-size:38.4px;line-height:46px;color:#141414;"><span style="color:#19dde6">Herr Max  Muster</span></div>
<div class="t" style="left:2352.8px;top:917.2px;font-size:38.4px;line-height:46px;color:#141414;"><span style="color:#19dde6">[Straße] [Hausnummer]</span></div>
<div class="t" style="left:2352.8px;top:961.7px;font-size:38.4px;line-height:46px;color:#141414;"><span style="color:#19dde6">[PLZ] [Stadt]</span></div>
<div class="t" style="left:2352.8px;top:1006.4px;font-size:38.4px;line-height:46px;color:#141414;"><span style="color:#19dde6">[E-Mail]</span></div>
<div class="a" style="left:2249.6px;top:1118.0px;width:63.4px;height:67.6px;background:#6ec4e8;"></div>
<div class="t" style="left:2249.6px;top:1118.0px;width:63.4px;height:67.6px;line-height:67.6px;text-align:center;font-size:36px;font-weight:bold;color:#fafdff;transform:scaleY(1.26)">2</div>
<div class="t" style="left:2352.8px;top:1106.7px;font-size:38.4px;line-height:46px;color:#141414;"><span style="color:#19dde6">[Das ist ein Platzhalter-Textfeld</span></div>
<div class="t" style="left:2352.8px;top:1152.7px;font-size:38.4px;line-height:46px;color:#141414;"><span style="color:#19dde6">mit Platz für Text bis zu</span></div>
<div class="t" style="left:2352.8px;top:1198.7px;font-size:38.4px;line-height:46px;color:#141414;"><span style="color:#19dde6">3 Zeilen.]</span></div>
<div class="a" style="left:2249.6px;top:1294.7px;width:63.4px;height:69.3px;background:#6ec4e8;"></div>
<div class="t" style="left:2249.6px;top:1294.7px;width:63.4px;height:69.3px;line-height:69.3px;text-align:center;font-size:36px;font-weight:bold;color:#fafdff;transform:scaleY(1.26)">3</div>
<div class="t" style="left:2352.8px;top:1285.7px;font-size:38.4px;line-height:46px;color:#141414;">Das ist ein Beispiel-Textfeld mit einem <span style="color:#19dde6">[Platzhalter]</span></div>
<div class="t" style="left:2352.8px;top:1330.3px;font-size:38.4px;line-height:46px;color:#141414;">umgeben von festem Text.</div>
<div class="a" style="left:2249.6px;top:1433.6px;width:63.4px;height:69.4px;background:#6ec4e8;"></div>
<div class="t" style="left:2249.6px;top:1433.6px;width:63.4px;height:69.4px;line-height:69.4px;text-align:center;font-size:36px;font-weight:bold;color:#fafdff;transform:scaleY(1.26)">4</div>
<div class="t" style="left:2352.8px;top:1424.7px;font-size:38.4px;line-height:46px;color:#141414;">Das ist ein Beispiel-Textfeld mit einem <span style="color:#19dde6">erstens #</span></div>
<div class="t" style="left:2352.8px;top:1469.2px;font-size:38.4px;line-height:46px;color:#141414;"><span style="color:#19dde6">zweitens # drittens # viertens</span> der <i>mehrere data-keys</i></div>
<div class="t" style="left:2352.8px;top:1513.7px;font-size:38.4px;line-height:46px;color:#141414;">inkl. <i>separator</i> (#) beinhaltet.</div>
<div class="a" style="left:2249.6px;top:1619.6px;width:63.4px;height:67.0px;background:#6ec4e8;"></div>
<div class="t" style="left:2249.6px;top:1619.6px;width:63.4px;height:67.0px;line-height:67.0px;text-align:center;font-size:36px;font-weight:bold;color:#fafdff;transform:scaleY(1.26)">5</div>
<div class="t" style="left:2352.8px;top:1608.1px;font-size:38.4px;line-height:46px;color:#141414;">Das ist ein Beispiel-Textfeld mit einem</div>
<div class="t" style="left:2352.8px;top:1655.2px;font-size:38.4px;line-height:46px;color:#141414;"><span style="color:#19dde6">Zeile 1</span></div>
<div class="t" style="left:2352.8px;top:1700.7px;font-size:38.4px;line-height:46px;color:#141414;"><span style="color:#19dde6">Zeile 2</span></div>
<div class="t" style="left:2352.8px;top:1745.5px;font-size:38.4px;line-height:46px;color:#141414;"><span style="color:#19dde6">Zeile 3</span></div>
<div class="t" style="left:2352.8px;top:1794.1px;font-size:38.4px;line-height:46px;color:#141414;">der <i>mehrere data-keys</i> beinhaltet.</div>
<div class="t" style="left:2352.8px;top:1838.7px;font-size:38.4px;line-height:46px;color:#141414;">Als <i>separator</i> ist ein Zeilenumbruch definiert (¶).</div>
<div class="a" style="left:2249.6px;top:1977.0px;width:63.4px;height:69.5px;background:#6ec4e8;"></div>
<div class="t" style="left:2249.6px;top:1977.0px;width:63.4px;height:69.5px;line-height:69.5px;text-align:center;font-size:36px;font-weight:bold;color:#fafdff;transform:scaleY(1.26)">6</div>
<div class="t" style="left:2352.8px;top:1968.0px;font-size:38.4px;line-height:46px;color:#141414;">Das ist ein Beispiel-Textfeld mit einem <span style="color:#19dde6">[Platzhalter]</span> der</div>
<div class="t" style="left:2352.8px;top:2013.7px;font-size:38.4px;line-height:46px;color:#141414;"><i>mehrere data-keys</i> beinhaltet. Der <i>separator</i> (!) ist in</div>
<div class="t" style="left:2352.8px;top:2058.3px;font-size:38.4px;line-height:46px;color:#141414;">diesem Feld über <i>Unicode</i> definiert.</div>
<div class="a" style="left:2249.6px;top:2192.8px;width:63.4px;height:68.2px;background:#6ec4e8;"></div>
<div class="t" style="left:2249.6px;top:2192.8px;width:63.4px;height:68.2px;line-height:68.2px;text-align:center;font-size:36px;font-weight:bold;color:#fafdff;transform:scaleY(1.26)">7</div>
<div class="t" style="left:2352.8px;top:2183.7px;font-size:38.4px;line-height:46px;color:#141414;">Das ist ein Beispiel-Textfeld mit zwei Platzhaltern und</div>
<div class="t" style="left:2352.8px;top:2228.4px;font-size:38.4px;line-height:46px;color:#141414;">einem Standardtext, der nur <i>eingeblendet</i> wird wenn</div>
<div class="t" style="left:2352.8px;top:2275.6px;font-size:38.4px;line-height:46px;color:#141414;"><i>beide</i> Platzhalter befüllt wurden.</div>
<div class="t" style="left:2352.8px;top:2320.2px;font-size:38.4px;line-height:46px;color:#141414;"><span style="color:#19dde6">[7a Pflichtfeld]</span></div>
<div class="t" style="left:2352.8px;top:2365.7px;font-size:38.4px;line-height:46px;color:#141414;"><span style="color:#19dde6">[7b Pflichtfeld]</span></div>
<div class="a" style="left:2249.6px;top:2498.5px;width:63.4px;height:69.5px;background:#6ec4e8;"></div>
<div class="t" style="left:2249.6px;top:2498.5px;width:63.4px;height:69.5px;line-height:69.5px;text-align:center;font-size:36px;font-weight:bold;color:#fafdff;transform:scaleY(1.26)">8</div>
<div class="t" style="left:2352.8px;top:2488.0px;font-size:38.4px;line-height:46px;color:#141414;">Das ist ein Beispiel-Textfeld mit zwei Platzhaltern und</div>
<div class="t" style="left:2352.8px;top:2535.1px;font-size:38.4px;line-height:46px;color:#141414;">einem Hinweis (Standardtext), der <i>ausgeblendet</i> wird</div>
<div class="t" style="left:2352.8px;top:2580.7px;font-size:38.4px;line-height:46px;color:#141414;">wenn <i>beide</i> Platzhalter befüllt wurden.</div>
<div class="t" style="left:2352.8px;top:2626.9px;font-size:38.4px;line-height:46px;color:#141414;"><span style="color:#19dde6">[8a Pflichtfeld]</span></div>
<div class="t" style="left:2352.8px;top:2674.0px;font-size:38.4px;line-height:46px;color:#141414;"><span style="color:#19dde6">[8b Pflichtfeld]</span></div>
<div class="t" style="left:2352.8px;top:2717.5px;font-size:31.8px;line-height:38px;color:#3ee01c;font-weight:bold">[8a] und [8b] sind Pflichtfelder. Dieser Hinweis verschwindet</div>
<div class="t" style="left:2352.8px;top:2757.0px;font-size:31.8px;line-height:38px;color:#3ee01c;font-weight:bold">erst wenn beide Felder ausgefüllt sind.</div>
<div class="a" style="left:3938.0px;top:229.0px;width:773.0px;height:2724.0px;background:#424145;"></div>
<div class="t" style="left:3967.0px;top:263.3px;font-size:54px;line-height:65px;color:#c4c4c4;letter-spacing:2.3px">Formulareditor</div>
<div class="t" style="left:3967.0px;top:337.8px;font-size:38px;line-height:46px;color:#bdbdbd;letter-spacing:1.27px">Vordefinierte Felder hier ausfüllen. Die</div>
<div class="t" style="left:3967.0px;top:390.3px;font-size:38px;line-height:46px;color:#bdbdbd;letter-spacing:1.27px">Aktualisierung erfolgt in Echtzeit.</div>
<div class="t" style="left:3966.0px;top:475.0px;font-size:36px;line-height:43px;color:#c4c4c4;letter-spacing:2.2px">Firma</div>
<div class="a" style="left:3967px;top:524.3px;width:716px;height:82px;background:#2d2c31;border-radius:3px;overflow:hidden"><div class="t" style="left:30.5px;top:18.5px;font-size:37px;line-height:44px;letter-spacing:1.6px;color:#e6e6e6;width:655px;overflow:hidden">Rissc Solutions</div></div>
<div class="t" style="left:3966.0px;top:611.6px;font-size:36px;line-height:43px;color:#c4c4c4;letter-spacing:2.2px">Anrede</div>
<div class="a" style="left:3967px;top:660.8px;width:716px;height:82px;background:#2d2c31;border-radius:3px;overflow:hidden"><div class="t" style="left:30.5px;top:18.5px;font-size:37px;line-height:44px;letter-spacing:1.6px;color:#e6e6e6;width:655px;overflow:hidden">Herr</div></div>
<div class="t" style="left:3966.0px;top:748.1px;font-size:36px;line-height:43px;color:#c4c4c4;letter-spacing:2.2px">Vorname</div>
<div class="a" style="left:3967px;top:797.4px;width:716px;height:82px;background:#2d2c31;border-radius:3px;overflow:hidden"><div class="t" style="left:30.5px;top:18.5px;font-size:37px;line-height:44px;letter-spacing:1.6px;color:#e6e6e6;width:655px;overflow:hidden">Max</div></div>
<div class="t" style="left:3966.0px;top:884.6px;font-size:36px;line-height:43px;color:#c4c4c4;letter-spacing:2.2px">Nachname</div>
<div class="a" style="left:3967px;top:933.9px;width:716px;height:82px;background:#2d2c31;border-radius:3px;overflow:hidden"><div class="t" style="left:30.5px;top:18.5px;font-size:37px;line-height:44px;letter-spacing:1.6px;color:#e6e6e6;width:655px;overflow:hidden">Muster</div></div>
<div class="t" style="left:3966.0px;top:1021.2px;font-size:36px;line-height:43px;color:#c4c4c4;letter-spacing:2.2px">Straße</div>
<div class="a" style="left:3967px;top:1070.5px;width:716px;height:82px;background:#2d2c31;border-radius:3px;overflow:hidden"><div class="t" style="left:30.5px;top:18.5px;font-size:37px;line-height:44px;letter-spacing:1.6px;color:#77767b;width:655px;overflow:hidden">[Straße]</div></div>
<div class="t" style="left:3966.0px;top:1157.7px;font-size:36px;line-height:43px;color:#c4c4c4;letter-spacing:2.2px">Hausnummer</div>
<div class="a" style="left:3967px;top:1207.0px;width:716px;height:82px;background:#2d2c31;border-radius:3px;overflow:hidden"><div class="t" style="left:30.5px;top:18.5px;font-size:37px;line-height:44px;letter-spacing:1.6px;color:#77767b;width:655px;overflow:hidden">[Hausnummer]</div></div>
<div class="t" style="left:3966.0px;top:1294.3px;font-size:36px;line-height:43px;color:#c4c4c4;letter-spacing:2.2px">PLZ</div>
<div class="a" style="left:3967px;top:1343.5px;width:716px;height:82px;background:#2d2c31;border-radius:3px;overflow:hidden"><div class="t" style="left:30.5px;top:18.5px;font-size:37px;line-height:44px;letter-spacing:1.6px;color:#77767b;width:655px;overflow:hidden">[PLZ]</div></div>
<div class="t" style="left:3966.0px;top:1430.8px;font-size:36px;line-height:43px;color:#c4c4c4;letter-spacing:2.2px">Stadt</div>
<div class="a" style="left:3967px;top:1480.1px;width:716px;height:82px;background:#2d2c31;border-radius:3px;overflow:hidden"><div class="t" style="left:30.5px;top:18.5px;font-size:37px;line-height:44px;letter-spacing:1.6px;color:#77767b;width:655px;overflow:hidden">[Stadt]</div></div>
<div class="t" style="left:3966.0px;top:1567.3px;font-size:36px;line-height:43px;color:#c4c4c4;letter-spacing:2.2px">E-Mail</div>
<div class="a" style="left:3967px;top:1616.6px;width:716px;height:82px;background:#2d2c31;border-radius:3px;overflow:hidden"><div class="t" style="left:30.5px;top:18.5px;font-size:37px;line-height:44px;letter-spacing:1.6px;color:#77767b;width:655px;overflow:hidden">[E-Mail]</div></div>
<div class="t" style="left:3966.0px;top:1703.9px;font-size:36px;line-height:43px;color:#c4c4c4;letter-spacing:2.2px">2 Platzhater-Textrahmen</div>
<div class="a" style="left:3967px;top:1753.2px;width:716px;height:82px;background:#2d2c31;border-radius:3px;overflow:hidden"><div class="t" style="left:30.5px;top:18.5px;font-size:37px;line-height:44px;letter-spacing:1.6px;color:#77767b;width:655px;overflow:hidden">[Das ist ein Platzhalter-Textfeldmit F</div></div>
<div class="t" style="left:3966.0px;top:1840.4px;font-size:36px;line-height:43px;color:#c4c4c4;letter-spacing:2.2px">3 Platzhalter innerhalb Fließtext</div>
<div class="a" style="left:3967px;top:1889.7px;width:716px;height:82px;background:#2d2c31;border-radius:3px;overflow:hidden"><div class="t" style="left:30.5px;top:18.5px;font-size:37px;line-height:44px;letter-spacing:1.6px;color:#77767b;width:655px;overflow:hidden">[Platzhalter]</div></div>
<div class="t" style="left:3966.0px;top:1977.0px;font-size:36px;line-height:43px;color:#c4c4c4;letter-spacing:2.2px">4a</div>
<div class="a" style="left:3967px;top:2026.2px;width:716px;height:82px;background:#2d2c31;border-radius:3px;overflow:hidden"><div class="t" style="left:30.5px;top:18.5px;font-size:37px;line-height:44px;letter-spacing:1.6px;color:#e6e6e6;width:655px;overflow:hidden">erstens</div></div>
<div class="t" style="left:3966.0px;top:2113.5px;font-size:36px;line-height:43px;color:#c4c4c4;letter-spacing:2.2px">4b</div>
<div class="a" style="left:3967px;top:2162.8px;width:716px;height:82px;background:#2d2c31;border-radius:3px;overflow:hidden"><div class="t" style="left:30.5px;top:18.5px;font-size:37px;line-height:44px;letter-spacing:1.6px;color:#e6e6e6;width:655px;overflow:hidden">zweitens</div></div>
<div class="t" style="left:3966.0px;top:2250.0px;font-size:36px;line-height:43px;color:#c4c4c4;letter-spacing:2.2px">4c</div>
<div class="a" style="left:3967px;top:2299.3px;width:716px;height:82px;background:#2d2c31;border-radius:3px;overflow:hidden"><div class="t" style="left:30.5px;top:18.5px;font-size:37px;line-height:44px;letter-spacing:1.6px;color:#e6e6e6;width:655px;overflow:hidden">drittens</div></div>
<div class="t" style="left:3966.0px;top:2386.6px;font-size:36px;line-height:43px;color:#c4c4c4;letter-spacing:2.2px">4d</div>
<div class="a" style="left:3967px;top:2435.9px;width:716px;height:82px;background:#2d2c31;border-radius:3px;overflow:hidden"><div class="t" style="left:30.5px;top:18.5px;font-size:37px;line-height:44px;letter-spacing:1.6px;color:#e6e6e6;width:655px;overflow:hidden">viertens</div></div>
<div class="t" style="left:3966.0px;top:2523.1px;font-size:36px;line-height:43px;color:#c4c4c4;letter-spacing:2.2px">5a</div>
<div class="a" style="left:3967px;top:2572.4px;width:716px;height:82px;background:#2d2c31;border-radius:3px;overflow:hidden"><div class="t" style="left:30.5px;top:18.5px;font-size:37px;line-height:44px;letter-spacing:1.6px;color:#e6e6e6;width:655px;overflow:hidden">Zeile 1</div></div>
<div class="t" style="left:3966.0px;top:2659.7px;font-size:36px;line-height:43px;color:#c4c4c4;letter-spacing:2.2px">5b</div>
<div class="a" style="left:3967px;top:2708.9px;width:716px;height:82px;background:#2d2c31;border-radius:3px;overflow:hidden"><div class="t" style="left:30.5px;top:18.5px;font-size:37px;line-height:44px;letter-spacing:1.6px;color:#e6e6e6;width:655px;overflow:hidden">Zeile 2</div></div>
<div class="t" style="left:3966.0px;top:2796.2px;font-size:36px;line-height:43px;color:#c4c4c4;letter-spacing:2.2px">5c</div>
<div class="a" style="left:3967px;top:2845.5px;width:716px;height:82px;background:#2d2c31;border-radius:3px;overflow:hidden"><div class="t" style="left:30.5px;top:18.5px;font-size:37px;line-height:44px;letter-spacing:1.6px;color:#e6e6e6;width:655px;overflow:hidden">Zeile 3</div></div>
<div class="t" style="left:3966.0px;top:2932.7px;font-size:36px;line-height:43px;color:#c4c4c4;letter-spacing:2.2px">5d</div>
<div class="a" style="left:4711px;top:229px;width:43px;height:2724px;background:#fafafa;border-left:3px solid #ececec;border-right:3px solid #efefef"></div>
<div class="a" style="left:4723px;top:237px;width:22px;height:1914px;background:#c8c8c8;border-radius:11px"></div>
<div class="a" style="left:4754.0px;top:229.0px;width:266.0px;height:2724.0px;background:#2d2c31;"></div>
<div class="a" style="left:4754.0px;top:461.0px;width:263.0px;height:229.0px;background:#424145;"></div>
<svg style="left:0;top:0" width="1" height="1"><path d="M4892.400000000001,289 H4862.6 V352.4 H4912.1 V304.8" fill="none" stroke="#e6e6e6" stroke-width="3"/><g transform="translate(4892.1,305) rotate(-45)"><path d="M-19,-5 H18 A5,5 0 0 1 18,5 H-19 L-24,0 Z" fill="none" stroke="#e6e6e6" stroke-width="2.8" stroke-linejoin="round"/></g></svg>
<svg style="left:0;top:0" width="1" height="1"><path d="M4892.400000000001,520.8 H4862.6 V581.5 H4912.1 V537.3" fill="none" stroke="#e6e6e6" stroke-width="3"/><g transform="translate(4892.1,537.3) rotate(-45)"><path d="M-19,-5 H18 A5,5 0 0 1 18,5 H-19 L-24,0 Z" fill="none" stroke="#e6e6e6" stroke-width="2.8" stroke-linejoin="round"/></g><path d="M4870.200000000001,561.8 H4903.900000000001 M4870.200000000001,571.8 H4903.900000000001" stroke="#e6e6e6" stroke-width="3"/></svg>
<div class="t" style="left:3886.0px;width:2000px;text-align:center;top:375.0px;font-size:28px;line-height:34px;color:#bdbdbd;letter-spacing:0.95px">Editieren</div>
<div class="t" style="left:3886.0px;width:2000px;text-align:center;top:607.3px;font-size:28px;line-height:34px;color:#bdbdbd;letter-spacing:0.95px">Strict</div>
<svg style="left:0;top:0" width="1" height="1"><path d="M4879.3,2823.5 L4882.4,2815.8 L4890.8,2815.8 L4893.9,2823.5 L4894.0,2823.5 L4900.5,2818.4 L4907.9,2822.6 L4906.7,2830.8 L4906.8,2830.9 L4915.0,2829.7 L4919.2,2837.1 L4914.1,2843.6 L4914.1,2843.7 L4921.8,2846.8 L4921.8,2855.2 L4914.1,2858.3 L4914.1,2858.4 L4919.2,2864.9 L4915.0,2872.3 L4906.8,2871.1 L4906.7,2871.2 L4907.9,2879.4 L4900.5,2883.6 L4894.0,2878.5 L4893.9,2878.5 L4890.8,2886.2 L4882.4,2886.2 L4879.3,2878.5 L4879.2,2878.5 L4872.7,2883.6 L4865.3,2879.4 L4866.5,2871.2 L4866.4,2871.1 L4858.2,2872.3 L4854.0,2864.9 L4859.1,2858.4 L4859.1,2858.3 L4851.4,2855.2 L4851.4,2846.8 L4859.1,2843.7 L4859.1,2843.6 L4854.0,2837.1 L4858.2,2829.7 L4866.4,2830.9 L4866.5,2830.8 L4865.3,2822.6 L4872.7,2818.4 L4879.2,2823.5 Z" fill="none" stroke="#d8d8d8" stroke-width="2.6" stroke-linejoin="round"/><circle cx="4886.6" cy="2851" r="18.5" fill="none" stroke="#d8d8d8" stroke-width="2.6"/></svg>
<div class="t" style="left:3886.6px;width:2000px;text-align:center;top:2908.9px;font-size:28px;line-height:34px;color:#bdbdbd;letter-spacing:0.95px">Settings</div>
<div class="a" style="left:5017.0px;top:0.0px;width:3.0px;height:2953.0px;background:rgba(255,255,255,0.22);"></div>
</body></html>
